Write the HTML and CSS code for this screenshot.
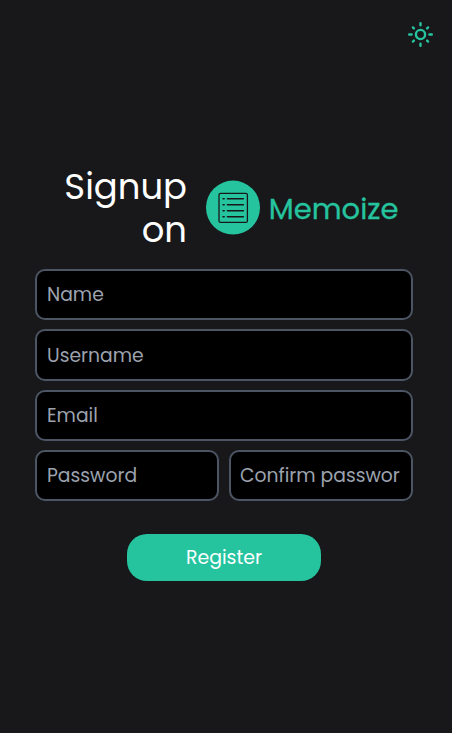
FILE: index.html
```html
<!DOCTYPE html>
<html lang="en">
<head>
<meta charset="utf-8">
<title>Signup on Memoize</title>
<link rel="stylesheet" href="styles.css">
</head>
<body>
<header class="topbar">
  <button class="theme-toggle" type="button" aria-label="Toggle theme">
    <svg viewBox="0 0 26 26" width="26" height="26" fill="none" stroke="currentColor" stroke-width="2.4">
      <circle cx="13.5" cy="12.5" r="4.6"/>
      <path stroke-linecap="round" d="M13.5 1.2v2M13.5 21.8v2M2.2 12.5h2.4M22.4 12.5h2.4M5.9 5.4l1 1M20.1 18.6l1 1M5.9 19.6l1-1M20.1 6.4l1-1"/>
    </svg>
  </button>
</header>
<main class="signup">
  <div class="heading">
    <h1 class="title">Signup on</h1>
    <div class="brand">
      <svg class="logo" viewBox="0 0 54 54" width="54" height="54" fill="none" stroke="#18181a">
        <circle cx="27" cy="26.6" r="27" fill="#25c49f" stroke="none"/>
        <rect x="13" y="12.4" width="28.4" height="29" rx="1.5" stroke-width="1.3"/>
        <path stroke-width="1.5" stroke-linecap="round" d="M21.4 17.8h16M21.4 23.8h16M21.4 29.8h16M21.4 35.8h16"/>
        <path stroke-width="1.5" stroke-linecap="round" d="M17 17.8h1.2M17 23.8h1.2M17 29.8h1.2M17 35.8h1.2"/>
      </svg>
      <span class="brand-name">Memoize</span>
    </div>
  </div>
  <form class="form">
    <input class="field" type="text" placeholder="Name">
    <input class="field username" type="text" placeholder="Username">
    <input class="field email" type="text" placeholder="Email">
    <div class="passwords">
      <input class="field" type="password" placeholder="Password">
      <input class="field confirm" type="password" placeholder="Confirm password">
    </div>
    <button class="submit" type="button">Register</button>
  </form>
</main>
</body>
</html>
```
FILE: styles.css
```css
* {
  box-sizing: border-box;
}

body {
  margin: 0;
  height: 733px;
  overflow: hidden;
  background: #18181a;
  color: #fff;
  font-family: Poppins, Inter, sans-serif;
}

.topbar {
  display: flex;
  justify-content: flex-end;
  height: 164.5px;
  padding: 22px 19px 0 0;
}

.theme-toggle {
  width: 26px;
  height: 26px;
  padding: 0;
  border: 0;
  background: none;
  color: #25c49f;
}

.theme-toggle svg {
  display: block;
}

.signup {
  width: 378px;
  margin-left: 35px;
}

.heading {
  display: flex;
  align-items: center;
  height: 86px;
}

.title {
  width: 152px;
  margin: 0;
  font-size: 35.4px;
  font-weight: 400;
  line-height: 43px;
  text-align: right;
}

.brand {
  display: flex;
  align-items: center;
  margin-left: 19.3px;
}

.logo {
  flex: none;
  overflow: visible;
}

.brand-name {
  margin: 2px 0 0 8.5px;
  color: #25c49f;
  font-size: 29px;
  font-weight: 400;
  line-height: 40px;
  -webkit-text-stroke: 0.3px #25c49f;
}

.form {
  display: flex;
  flex-direction: column;
  gap: 9.4px;
  margin-top: 18.6px;
}

.field {
  width: 100%;
  min-width: 0;
  height: 51px;
  padding: 0 10px;
  border: 2px solid #4b5563;
  border-radius: 10px;
  background: #000;
  color: #fff;
  font-family: inherit;
  font-size: 18.75px;
}

.field::placeholder {
  color: #9ca3af;
  opacity: 1;
}

.username {
  height: 52px;
  padding-top: 1px;
}

.email {
  margin-top: -1px;
}

.passwords {
  display: grid;
  grid-template-columns: 184px 184px;
  gap: 10px;
}

.confirm {
  padding: 0 11px 0 9px;
}

.submit {
  align-self: center;
  width: 194px;
  height: 47px;
  margin-top: 23.4px;
  padding: 0;
  border: 0;
  border-radius: 20px;
  background: #25c49f;
  color: #fff;
  font-family: inherit;
  font-size: 18.9px;
}
```
